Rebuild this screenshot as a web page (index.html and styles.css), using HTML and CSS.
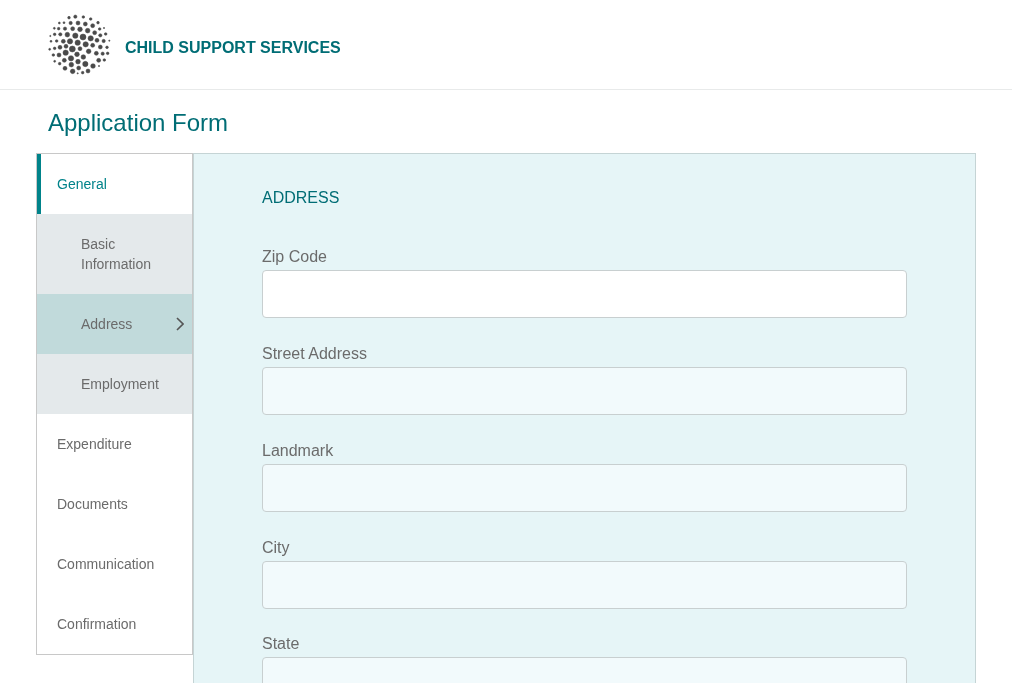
FILE: index.html
```html
<!DOCTYPE html>
<html lang="en">
<head>
<meta charset="utf-8">
<title>Application Form</title>
<link rel="stylesheet" href="styles.css">
</head>
<body>
<div class="page">
  <header class="site-header">
    <svg class="logo" viewBox="54 36 192 192" width="64" height="64" fill="#4a4a4a" stroke="#4a4a4a" stroke-width="1.5" aria-hidden="true">
      <circle cx="117" cy="53" r="4"/><circle cx="136" cy="50" r="5"/><circle cx="160" cy="51" r="4"/><circle cx="182" cy="57" r="4"/>
      <circle cx="88" cy="69" r="3"/><circle cx="102" cy="68" r="3"/><circle cx="122" cy="69" r="5"/><circle cx="144" cy="69" r="6"/><circle cx="166" cy="72" r="6"/><circle cx="188" cy="77" r="6"/><circle cx="204" cy="68" r="4"/>
      <circle cx="73" cy="85" r="3"/><circle cx="86" cy="86" r="4"/><circle cx="105" cy="86" r="5"/><circle cx="128" cy="86" r="6"/><circle cx="150" cy="88" r="7"/><circle cx="173" cy="92" r="7"/><circle cx="194" cy="98" r="6"/><circle cx="209" cy="87" r="4"/><circle cx="222" cy="84" r="2"/>
      <circle cx="61" cy="108" r="2"/><circle cx="74" cy="103" r="4"/><circle cx="91" cy="103" r="5"/><circle cx="112" cy="104" r="7"/><circle cx="136" cy="107" r="8"/><circle cx="159" cy="111" r="9"/><circle cx="182" cy="115" r="8"/><circle cx="211" cy="106" r="5"/><circle cx="227" cy="102" r="4"/>
      <circle cx="63" cy="124" r="3"/><circle cx="80" cy="123" r="4"/><circle cx="100" cy="124" r="6"/><circle cx="120" cy="124" r="8"/><circle cx="143" cy="128" r="8"/><circle cx="167" cy="133" r="8"/><circle cx="188" cy="136" r="6"/><circle cx="201" cy="121" r="6"/><circle cx="221" cy="123" r="5"/><circle cx="238" cy="122" r="2"/>
      <circle cx="59" cy="148" r="3"/><circle cx="74" cy="145" r="4"/><circle cx="90" cy="142" r="6"/><circle cx="108" cy="139" r="6"/><circle cx="127" cy="147" r="9"/><circle cx="150" cy="146" r="6"/><circle cx="176" cy="154" r="7"/><circle cx="199" cy="160" r="6"/><circle cx="211" cy="141" r="6"/><circle cx="231" cy="142" r="4"/>
      <circle cx="70" cy="165" r="4"/><circle cx="87" cy="165" r="6"/><circle cx="107" cy="158" r="8"/><circle cx="141" cy="163" r="7"/><circle cx="160" cy="171" r="7"/><circle cx="218" cy="161" r="5"/><circle cx="233" cy="160" r="4"/>
      <circle cx="74" cy="184" r="3"/><circle cx="89" cy="191" r="4"/><circle cx="103" cy="181" r="6"/><circle cx="123" cy="175" r="8"/><circle cx="124" cy="194" r="7"/><circle cx="144" cy="185" r="7"/><circle cx="166" cy="192" r="8"/><circle cx="189" cy="198" r="7"/><circle cx="206" cy="181" r="6"/><circle cx="223" cy="180" r="4"/><circle cx="207" cy="198" r="2"/>
      <circle cx="105" cy="205" r="6"/><circle cx="146" cy="204" r="6"/><circle cx="128" cy="214" r="7"/><circle cx="174" cy="213" r="6"/><circle cx="158" cy="218" r="4"/><circle cx="143" cy="220" r="2"/>
    </svg>
    <span class="brand">CHILD SUPPORT SERVICES</span>
  </header>
  <h1 class="page-title">Application Form</h1>
  <div class="layout">
    <nav class="sidenav">
      <a class="nav-item is-current">General</a>
      <a class="nav-item nav-sub tall">Basic<br>Information</a>
      <a class="nav-item nav-sub is-active">Address
        <svg class="chevron" viewBox="0 0 8 14" width="8" height="14" aria-hidden="true"><path d="M1 1l6 6-6 6" fill="none" stroke="#555" stroke-width="1.6"/></svg>
      </a>
      <a class="nav-item nav-sub">Employment</a>
      <a class="nav-item">Expenditure</a>
      <a class="nav-item">Documents</a>
      <a class="nav-item">Communication</a>
      <a class="nav-item">Confirmation</a>
    </nav>
    <main class="panel">
      <h2 class="section-title">ADDRESS</h2>
      <form class="form">
        <div class="field"><label class="field-label">Zip Code</label><input class="field-input is-focus" type="text"></div>
        <div class="field"><label class="field-label">Street Address</label><input class="field-input" type="text"></div>
        <div class="field"><label class="field-label">Landmark</label><input class="field-input" type="text"></div>
        <div class="field"><label class="field-label">City</label><input class="field-input" type="text"></div>
        <div class="field"><label class="field-label">State</label><input class="field-input" type="text"></div>
      </form>
    </main>
  </div>
</div>
</body>
</html>
```

FILE: styles.css
```css
* { box-sizing: border-box; }
html, body { margin: 0; height: 683px; overflow: hidden; background: #fff; }
body { font-family: "Liberation Sans", Arial, sans-serif; color: #666; }
.page { width: 1012px; will-change: transform; }
.site-header {
  height: 90px;
  display: flex;
  align-items: center;
  gap: 13px;
  padding: 0 48px;
  border-bottom: 1px solid #e8eaea;
}
.logo { flex: none; margin-top: -1px; }
.brand { font-size: 16px; font-weight: 700; color: #006d75; margin-top: 7px; }
.page-title {
  margin: 0;
  padding: 0 48px;
  height: 63px;
  line-height: 66px;
  font-size: 24px;
  font-weight: 400;
  color: #006d75;
}
.layout { display: flex; align-items: flex-start; padding: 0 36px; }
.sidenav {
  width: 157px;
  flex: none;
  border: 1px solid #c8c8c8;
  display: flex;
  flex-direction: column;
}
.nav-item {
  position: relative;
  height: 60px;
  display: flex;
  align-items: center;
  padding-left: 20px;
  font-size: 14px;
  line-height: 20px;
  color: #6b6b6b;
}
.is-current { color: #00838a; border-left: 4px solid #00838a; padding-left: 16px; }
.nav-sub { background: #e4e9eb; padding-left: 44px; }
.tall { height: 80px; display: block; padding-top: 20px; }
.is-active { background: #c1dadb; }
.chevron { position: absolute; right: 8px; top: 23px; }
.panel {
  flex: 1;
  height: 600px;
  background: #e6f5f7;
  border: 1px solid #c5d4d5;
  padding: 34px 68px 0;
}
.section-title {
  margin: 0 0 36.2px;
  font-size: 16px;
  line-height: 20px;
  font-weight: 400;
  color: #006d75;
}
.form { display: flex; flex-direction: column; gap: 22.8px; }
.field { display: flex; flex-direction: column; }
.field-label { font-size: 16px; line-height: 26px; height: 26px; color: #6b6b6b; }
.field-input {
  height: 48px;
  width: 100%;
  background: #f2fafc;
  border: 1px solid #c8cfd0;
  border-radius: 4px;
  outline: none;
}
.is-focus { background: #fff; }
```
